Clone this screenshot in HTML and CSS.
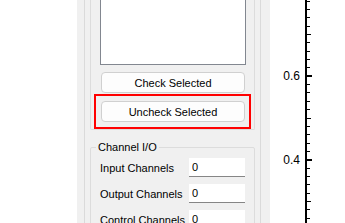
FILE: index.html
```html
<!DOCTYPE html>
<html lang="en">
<head>
  <meta charset="UTF-8" />
  <title>Channel Setup</title>
  <link rel="stylesheet" href="styles.css">
</head>
<body>
  <div class="window">
    <!-- left plot (blank part) -->
    <div class="side-plot"></div>

    <!-- Settings panel -->
    <div class="panel">
      <div class="frame">
        <div class="group selection-group">
          <div class="list-box"></div>
          <button class="btn check-btn">Check Selected</button>
          <div class="highlight">
            <button class="btn">Uncheck Selected</button>
          </div>
        </div>

        <fieldset class="io-group">
          <legend>Channel I/O</legend>
          <div class="io-row">
            <label>Input Channels</label>
            <input type="text" value="0" />
          </div>
          <div class="io-row">
            <label>Output Channels</label>
            <input type="text" value="0" />
          </div>
          <div class="io-row">
            <label>Control Channels</label>
            <input type="text" value="0" />
          </div>
        </fieldset>
      </div>
    </div>

    <!-- Plot axis -->
    <div class="plot">
      <svg width="75" height="223" viewBox="0 0 75 223">
        <rect x="35" y="0" width="2" height="223" fill="#000" />
        <path stroke="#000" stroke-width="1" fill="none"
          d="M37 1.5h3M37 9.5h3M37 17.5h3M37 26.5h3M37 42.5h3M37 51.5h3M37 59.5h3M37 67.5h3
             M37 84.5h3M37 92.5h3M37 101.5h3M37 109.5h3M37 126.5h3M37 134.5h3M37 143.5h3M37 151.5h3
             M37 168.5h3M37 176.5h3M37 184.5h3M37 193.5h3M37 209.5h3M37 218.5h3
             M37 34.5h4M37 118.5h4M37 201.5h4" />
        <path stroke="#000" stroke-width="2" fill="none" d="M35 76h7M35 160h7" />
        <text class="tick-label" x="30" y="80">0.6</text>
        <text class="tick-label" x="30" y="164">0.4</text>
      </svg>
    </div>
  </div>
</body>
</html>
```

FILE: styles.css
```css
body {
  margin: 0;
  font-family: "Liberation Sans", Arial, sans-serif;
  font-size: 11px;
  background: white;
  overflow: hidden;
}

.window {
  display: flex;
  height: 223px;
  overflow: hidden;
}

.side-plot {
  width: 77px;
  background: white;
}

.panel {
  width: 193px;
  box-sizing: border-box;
  padding-left: 7px;
  background: #f0f0f0;
}

.frame {
  width: 177px;
  height: 100%;
  box-sizing: border-box;
  padding: 0 5px;
  border-left: 1px solid #dadada;
  border-right: 1px solid #dadada;
}

.selection-group {
  height: 130px;
  box-sizing: border-box;
  display: flex;
  flex-direction: column;
  align-items: flex-start;
  border: 1px solid #dcdcdc;
  border-top: none;
  border-radius: 0 0 2px 2px;
}

.list-box {
  margin-left: 9px;
  width: 146px;
  height: 65px;
  box-sizing: border-box;
  background: white;
  border: 1px solid #828790;
  border-top: none;
}

.btn {
  width: 144px;
  height: 21px;
  padding: 0;
  font-family: inherit;
  font-size: 11px;
  color: #000;
  background: #fdfdfd;
  border: 1px solid #d0d0d0;
  border-radius: 4px;
}

.check-btn {
  margin-top: 7px;
  margin-left: 10px;
}

.highlight {
  margin-top: 1px;
  margin-left: 3px;
  width: 157px;
  height: 35px;
  box-sizing: border-box;
  padding: 5px 0 0 5px;
  border: 2px solid #ff0000;
}

/* Channel I/O */
.io-group {
  margin: 10px 0 0 0;
  padding: 4px 0 0 9px;
  width: 165px;
  box-sizing: border-box;
  border: 1px solid #dcdcdc;
  border-radius: 2px;
}

.io-group legend {
  margin-left: -4px;
  padding: 0 2px;
  line-height: 14px;
  color: #000;
}

.io-row {
  display: flex;
  align-items: center;
  height: 19px;
  margin-bottom: 7px;
}

.io-row label {
  width: 89px;
  color: #000;
}

.io-row input {
  width: 56px;
  height: 19px;
  box-sizing: border-box;
  padding: 0 0 0 3px;
  font-family: inherit;
  font-size: 11px;
  color: #000;
  background: white;
  border: none;
  border-bottom: 1px solid #868686;
  outline: none;
}

.plot {
  flex: 1;
  background: white;
}

.plot svg {
  display: block;
}

.tick-label {
  font-family: "Liberation Sans", Arial, sans-serif;
  font-size: 12px;
  text-anchor: end;
  fill: #000;
}
```
